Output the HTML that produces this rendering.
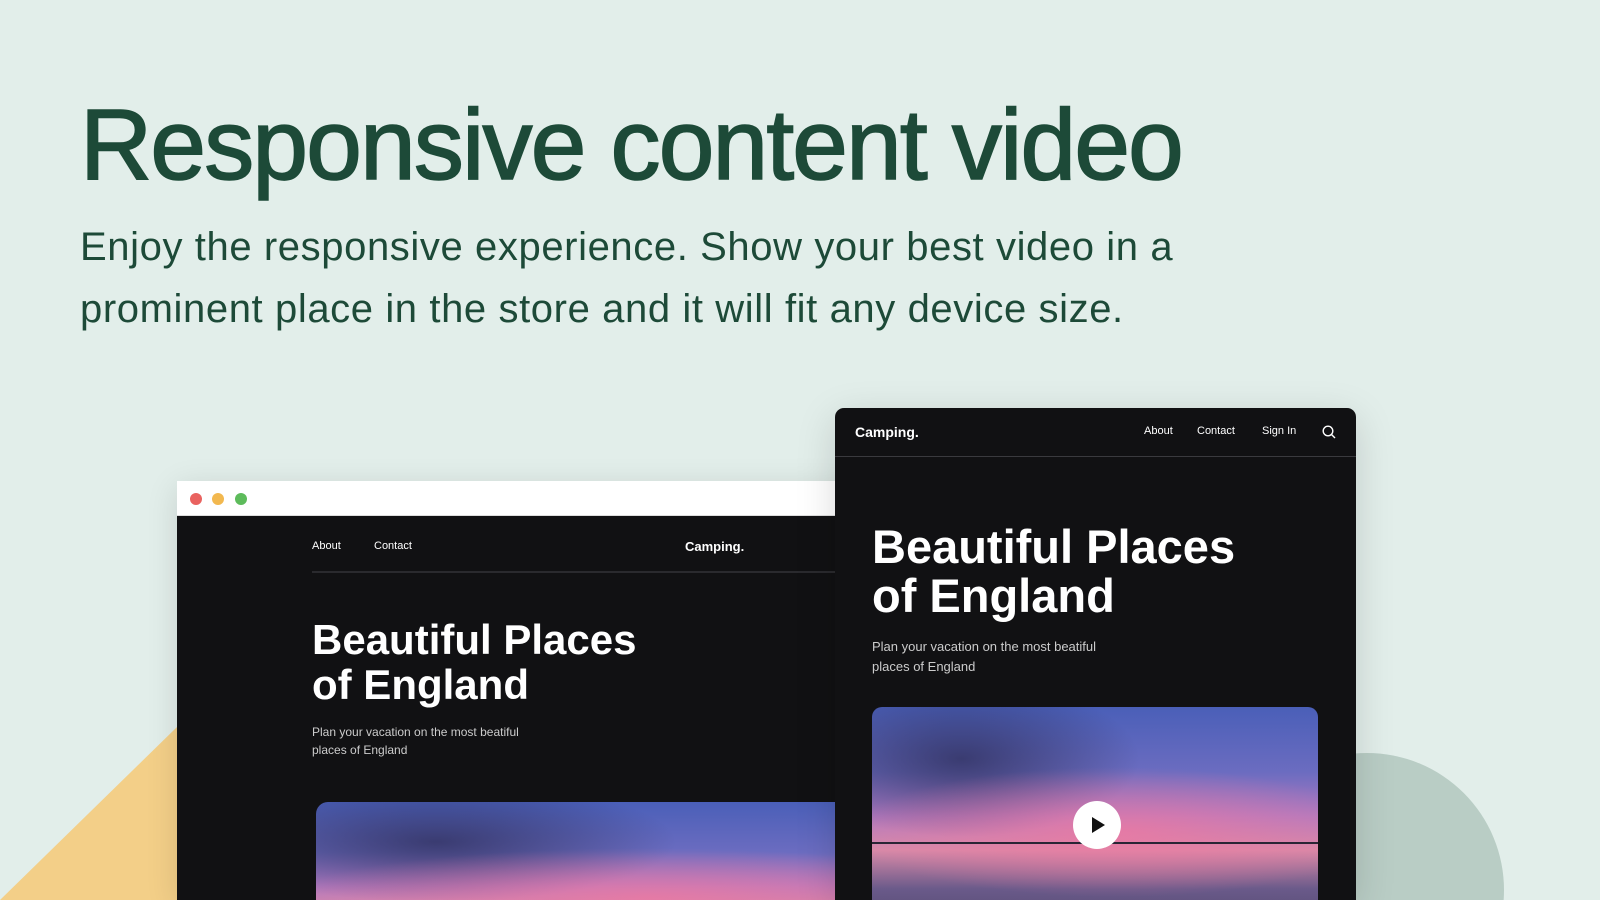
<!DOCTYPE html>
<html><head><meta charset="utf-8"><style>
*{margin:0;padding:0;box-sizing:border-box}
html,body{width:1600px;height:900px;overflow:hidden}
body{background:#e2eeea;position:relative;font-family:"Liberation Sans",sans-serif}
.h1{position:absolute;left:80px;top:88px;font-size:100px;color:#1d4a38;font-weight:normal;letter-spacing:-1.8px;-webkit-text-stroke:1.6px #1d4a38;white-space:nowrap}
.sub{position:absolute;left:80px;top:216px;font-size:40px;line-height:62px;color:#1d4a38;width:1250px;letter-spacing:.6px}
.tri{position:absolute;left:0;top:0;width:1600px;height:900px}
.browser{position:absolute;left:177px;top:481px;width:680px;height:419px;background:#111113;box-shadow:0 6px 30px rgba(0,0,0,.12);overflow:hidden}
.bar{height:35px;background:#fff;border-bottom:1px solid #ddd;position:relative}
.dot{position:absolute;top:12px;width:12px;height:12px;border-radius:50%}
.w{color:#fff;position:absolute;white-space:nowrap}
.card{position:absolute;left:835px;top:408px;width:521px;height:492px;background:#111113;border-radius:9px 9px 0 0;box-shadow:0 10px 40px rgba(0,0,0,.15);overflow:hidden}
.sky{position:absolute;overflow:hidden;background:
radial-gradient(ellipse 60% 25% at 55% 48%,rgba(240,120,160,.75),transparent),
radial-gradient(ellipse 40% 30% at 20% 20%,rgba(40,40,80,.7),transparent),
linear-gradient(180deg,#4a5fb8 0%,#6b6cc0 25%,#b07ac0 42%,#d88aa8 55%,#6a5a8a 70%,#3a3550 100%)}
</style></head><body>
<svg class="tri" viewBox="0 0 1600 900"><polygon points="0,900 177,727 260,900" fill="#f3cf88"/><circle cx="1367" cy="890" r="137" fill="#b9cdc5"/></svg>
<div class="h1">Responsive content video</div>
<div class="sub">Enjoy the responsive experience. Show your best video in a prominent place in the store and it will fit any device size.</div>

<div class="browser">
 <div class="bar"><div class="dot" style="left:13px;background:#e9625f"></div><div class="dot" style="left:35px;background:#f2b84f"></div><div class="dot" style="left:58px;background:#5dbb5b"></div></div>
 <div class="w" style="left:135px;top:59px;font-size:11px">About</div>
 <div class="w" style="left:197px;top:59px;font-size:11px">Contact</div>
 <div class="w" style="left:508px;top:58px;font-size:13px;font-weight:bold">Camping.</div>
 <div style="position:absolute;left:135px;top:90px;width:600px;height:2px;background:#2a2a2e"></div>
 <div class="w" style="left:135px;top:136px;font-size:42px;line-height:45px;font-weight:bold;letter-spacing:0">Beautiful Places<br>of England</div>
 <div class="w" style="left:135px;top:242px;font-size:12px;line-height:18px;color:#ccc">Plan your vacation on the most beatiful<br>places of England</div>
 <div class="sky" style="left:139px;top:321px;width:600px;height:200px;border-radius:12px"></div>
</div>

<div class="card">
 <div class="w" style="left:20px;top:16px;font-size:14px;font-weight:bold">Camping.</div>
 <div class="w" style="left:309px;top:17px;font-size:11px">About</div>
 <div class="w" style="left:362px;top:17px;font-size:11px">Contact</div>
 <div class="w" style="left:427px;top:17px;font-size:11px">Sign In</div>
 <svg style="position:absolute;left:487px;top:17px" width="14" height="14" viewBox="0 0 14 14"><circle cx="6" cy="6" r="4.8" fill="none" stroke="#fff" stroke-width="1.4"/><line x1="9.5" y1="9.5" x2="13" y2="13" stroke="#fff" stroke-width="1.4"/></svg>
 <div style="position:absolute;left:0;top:48px;width:521px;height:1px;background:#3a3a3e"></div>
 <div class="w" style="left:37px;top:114px;font-size:47px;line-height:49px;font-weight:bold;letter-spacing:0">Beautiful Places<br>of England</div>
 <div class="w" style="left:37px;top:229px;font-size:13px;line-height:20px;color:#ccc">Plan your vacation on the most beatiful<br>places of England</div>
 <div class="sky" style="left:37px;top:299px;width:446px;height:260px;border-radius:10px">
  <div style="position:absolute;left:0;top:135px;width:446px;height:2px;background:#2a2535"></div>
  <div style="position:absolute;left:201px;top:94px;width:48px;height:48px;border-radius:50%;background:#fff"></div>
  <svg style="position:absolute;left:216px;top:108px" width="20" height="20" viewBox="0 0 20 20"><polygon points="4,2 17,10 4,18" fill="#111"/></svg>
 </div>
</div>
</body></html>
